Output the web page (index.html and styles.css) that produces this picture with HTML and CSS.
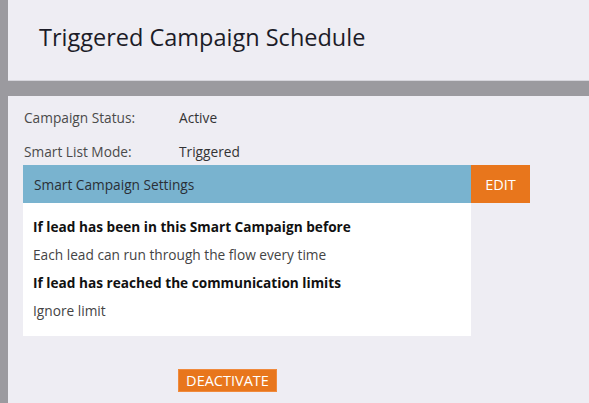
FILE: index.html
```html
<!DOCTYPE html>
<html>
<head>
<meta charset="utf-8">
<link rel="stylesheet" href="styles.css">
</head>
<body>
<div class="app">
  <header class="header">
    <h1 class="title">Triggered Campaign Schedule</h1>
  </header>
  <main class="content">
    <div class="info-row"><span class="info-label">Campaign Status:</span><span class="info-value">Active</span></div>
    <div class="info-row"><span class="info-label">Smart List Mode:</span><span class="info-value">Triggered</span></div>
    <section class="settings">
      <div class="settings-head">
        <div class="settings-title">Smart Campaign Settings</div>
        <button class="btn btn-edit">EDIT</button>
      </div>
      <div class="settings-body">
        <div class="setting-q">If lead has been in this Smart Campaign before</div>
        <div class="setting-a">Each lead can run through the flow every time</div>
        <div class="setting-q">If lead has reached the communication limits</div>
        <div class="setting-a">Ignore limit</div>
      </div>
    </section>
    <div class="actions">
      <button class="btn btn-deactivate">DEACTIVATE</button>
    </div>
  </main>
</div>
</body>
</html>
```
FILE: styles.css
```css
html, body {
  margin: 0;
  padding: 0;
  height: 100%;
}
body {
  background: #9b9a9f;
  font-family: "Open Sans", "Noto Sans", sans-serif;
  overflow: hidden;
}
.app {
  display: flex;
  flex-direction: column;
  padding-left: 8px;
  height: 100%;
}
.header {
  background: #eeedf3;
  height: 80px;
  border-bottom: 1px solid #d6d5dc;
  display: flex;
  align-items: center;
  padding-left: 31px;
  margin-bottom: 15px;
}
.title {
  margin: 0;
  font-weight: 400;
  font-size: 23.5px;
  color: #1c1c28;
  position: relative;
  top: -3px;
}
.content {
  flex: 1;
  background: #eeedf3;
  padding: 4px 0 0 15px;
}
.info-row {
  display: flex;
  height: 34px;
  align-items: center;
  font-size: 13.7px;
  color: #4a4a4a;
}
.info-label {
  width: 155px;
  padding-left: 1px;
}
.info-value {
  color: #333;
}
.settings {
  margin-top: -3px;
  width: 507px;
}
.settings-head {
  display: flex;
  height: 38px;
}
.settings-title {
  width: 437px;
  background: #79b3cf;
  padding-left: 11px;
  display: flex;
  align-items: center;
  font-size: 13.7px;
  color: #2a2f36;
}
.btn {
  border: none;
  background: #e8761c;
  color: #fff;
  font-family: "Open Sans", "Noto Sans", sans-serif;
  font-size: 14.5px;
  padding: 0;
  cursor: pointer;
}
.btn-edit {
  width: 59px;
  height: 38px;
}
.settings-body {
  width: 448px;
  background: #fff;
  padding: 10px 0 10px 10px;
  box-sizing: border-box;
  height: 133px;
}
.setting-q {
  font-weight: 700;
  font-size: 13.65px;
  color: #111;
  line-height: 28px;
}
.setting-a {
  font-size: 13.7px;
  color: #444;
  line-height: 28px;
}
.actions {
  padding: 33px 0 0 155px;
}
.btn-deactivate {
  width: 99px;
  height: 23px;
  border: 1px solid #f08a3c;
}
```
